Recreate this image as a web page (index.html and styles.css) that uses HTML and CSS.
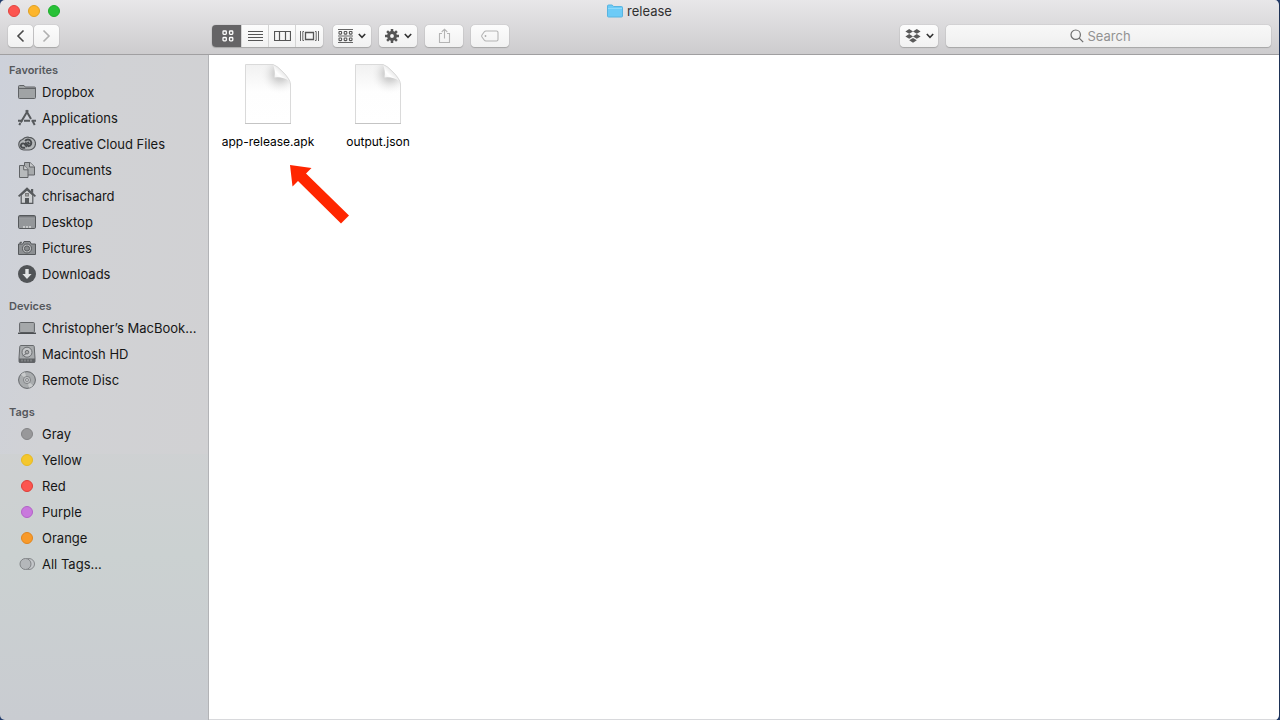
FILE: index.html
```html
<!DOCTYPE html>
<html lang="en">
<head>
<meta charset="utf-8">
<title>release</title>
<link rel="stylesheet" href="styles.css">
</head>
<body>
<div class="window">
  <header class="chrome">
    <div class="titlebar">
      <div class="lights">
        <button class="light light-close" aria-label="Close"></button>
        <button class="light light-min" aria-label="Minimize"></button>
        <button class="light light-zoom" aria-label="Zoom"></button>
      </div>
      <h1 class="title">
        <svg class="title-icon" width="16" height="14" viewBox="0 0 16 14"><path d="M.5 12V2q0-1 1-1h3.700l1.300 1.500H14.500q1 0 1 1V12q0 1-1 1h-13q-1 0-1-1z" fill="#6ccbf7" stroke="#58b4e0"/><path d="M1 4.500h14" stroke="#8edafb"/></svg>
        release
      </h1>
    </div>
    <div class="toolbar">
      <div class="nav">
        <button class="btn nav-btn" aria-label="Back"><svg width="9" height="14" viewBox="0 0 9 14"><path d="M7.500 1.500 2 7l5.500 5.500" class="line dark"/></svg></button>
        <button class="btn nav-btn" aria-label="Forward"><svg width="9" height="14" viewBox="0 0 9 14"><path d="M1.500 1.500 7 7l-5.500 5.500" class="line pale"/></svg></button>
      </div>
      <div class="tools">
        <div class="segments">
          <button class="seg seg-on" aria-label="Icon view"><svg width="12" height="12" viewBox="0 0 12 12"><g fill="none" stroke="#fff" stroke-width="1.300"><rect x="1" y="1" width="3.300" height="3.300" rx=".8"/><rect x="7.500" y="1" width="3.300" height="3.300" rx=".8"/><rect x="1" y="7.500" width="3.300" height="3.300" rx=".8"/><rect x="7.500" y="7.500" width="3.300" height="3.300" rx=".8"/></g></svg></button>
          <button class="seg" aria-label="List view"><svg width="15" height="12" viewBox="0 0 15 12"><path d="M0 1.500h15M0 4.500h15M0 7.500h15M0 10.500h15" stroke="#555"/></svg></button>
          <button class="seg" aria-label="Column view"><svg width="17" height="12" viewBox="0 0 17 12"><path d="M.5 1.500h16v9H.5zM5.500 1.500v9M11.500 1.500v9" fill="none" stroke="#555" stroke-width="1.200"/></svg></button>
          <button class="seg seg-last" aria-label="Gallery view"><svg width="19" height="12" viewBox="0 0 19 12"><path d="M5.500 2.500h8v7h-8z" fill="none" stroke="#555" stroke-width="1.300"/><path d="M.5 1v10M18.500 1v10M4 1.500H2.800v9H4M15 1.500h1.200v9H15" fill="none" stroke="#666"/></svg></button>
        </div>
        <button class="btn tool" aria-label="Arrange"><svg width="15" height="14" viewBox="0 0 15 14"><path d="M0 .5h15M0 7h15M0 13.500h15" stroke="#666"/><g fill="none" stroke="#555" stroke-width="1.100"><rect x="1" y="2.500" width="2.600" height="2.600" rx=".6"/><rect x="6.200" y="2.500" width="2.600" height="2.600" rx=".6"/><rect x="11.400" y="2.500" width="2.600" height="2.600" rx=".6"/><rect x="1" y="9" width="2.600" height="2.600" rx=".6"/><rect x="6.200" y="9" width="2.600" height="2.600" rx=".6"/><rect x="11.400" y="9" width="2.600" height="2.600" rx=".6"/></g></svg><svg class="chev" width="8" height="6" viewBox="0 0 8 6"><path d="m.8 1 3.200 3.300L7.200 1" class="line ink"/></svg></button>
        <button class="btn tool" aria-label="Action"><svg width="14" height="14" viewBox="-7 -7 14 14"><circle r="3.400" fill="none" stroke="#555" stroke-width="3"/><path d="M0-7V-4M0 4V7M-7 0h3M4 0h3M-4.900-4.900l2 2M2.900 2.900l2 2M-4.900 4.900l2-2M2.900-2.900l2-2" stroke="#555" stroke-width="2.500"/></svg><svg class="chev" width="8" height="6" viewBox="0 0 8 6"><path d="m.8 1 3.200 3.300L7.200 1" class="line ink"/></svg></button>
        <button class="btn tool" aria-label="Share"><svg width="13" height="16" viewBox="0 0 13 16"><path d="M4 5.500H1.500v9h10v-9H9M6.500 10.500V1.500M3.700 4l2.800-2.800L9.300 4" fill="none" stroke="#b4b4b4" stroke-width="1.100"/></svg></button>
        <button class="btn tool" aria-label="Edit tags"><svg width="18" height="12" viewBox="0 0 18 12"><path d="M5 1h10.500q1.500 0 1.500 1.500v7q0 1.500-1.500 1.500H5Q4 11 3.300 10.200L1 7Q.4 6 1 5l2.300-3.200Q4 1 5 1z" fill="none" stroke="#b4b4b4" stroke-width="1.100"/><circle cx="4.500" cy="6" r=".9" fill="#aaa"/></svg></button>
      </div>
      <button class="btn tool dropbox" aria-label="Dropbox"><svg width="16" height="14" viewBox="0 0 16 14"><path d="m4.200 0 3.800 2.400-3.800 2.400L.4 2.400zM11.800 0l3.800 2.400-3.800 2.400L8 2.400zM4.200 5l3.800 2.400-3.800 2.400L.4 7.400zM11.800 5l3.800 2.400-3.800 2.400L8 7.400zM8 8.900l3.800 2.400L8 13.700l-3.800-2.400z" fill="#5a5a5a"/></svg><svg class="chev" width="8" height="6" viewBox="0 0 8 6"><path d="m.8 1 3.200 3.300L7.200 1" class="line ink"/></svg></button>
      <label class="search">
        <svg width="14" height="14" viewBox="0 0 14 14"><circle cx="5.700" cy="5.700" r="4.700" class="thin"/><path d="m9.200 9.200 4 4" class="thin"/></svg>
        <input class="search-input" type="text" placeholder="Search" aria-label="Search">
      </label>
    </div>
  </header>
  <div class="content">
    <nav class="sidebar">
      <h2 class="group">Favorites</h2>
      <a class="item" href="#"><svg class="ico" viewBox="0 0 18 18"><path d="M.5 14.500v-11q0-1 1-1H6L7.200 4h9.300q1 0 1 1v9.500q0 1-1 1h-15q-1 0-1-1z" fill="#a0a3a5" stroke="#606366"/><path d="M1 5.500h16" stroke="#606366"/></svg>Dropbox</a>
      <a class="item" href="#"><svg class="ico" viewBox="0 0 18 18"><path d="M8 1.200 13 10M10 1.200 2.700 13.500M14.600 12l2.100 4" fill="none" stroke="#56595c" stroke-width="2"/><path d="M0 11.700h4.500M6 11.700h6M13.500 11.700H18M2.300 14 1.300 16.200" stroke="#56595c" stroke-width="2"/></svg>Applications</a>
      <a class="item" href="#"><svg class="ico" viewBox="0 0 18 18"><path d="M5.800 15a5.400 5.400 0 0 1-1.300-10.500A6.600 6.600 0 0 1 11 2.300a6.400 6.400 0 0 1 6.500 6.300A6.400 6.400 0 0 1 11 15z" fill="#b4b7b9" stroke="#56595c" stroke-width="1.200"/><path d="M9 11.900 6.200 8.700a2.200 2.200 0 1 0-.5 4h1.500" fill="none" stroke="#484b4e" stroke-width="1.900"/><path d="m7.200 7.500 3.500 3.600a3.300 3.300 0 1 0-3.500-5" fill="none" stroke="#484b4e" stroke-width="2"/><path d="m9.500 7 2 2.100" stroke="#484b4e" stroke-width="1.900"/></svg>Creative Cloud Files</a>
      <a class="item" href="#"><svg class="ico" viewBox="0 0 18 18"><path d="M6.500 14V1.500H12l4.500 4.300V14z" fill="#a7aaac" stroke="#606366"/><path d="M11.500 1.500V6h5" fill="#c8cacc" stroke="#606366"/><path d="M1.500 16.500V4.500H6l4 4v8z" fill="#b7babc" stroke="#606366"/><path d="M5.700 4.500v4.300H10" fill="#d0d2d3" stroke="#606366"/></svg>Documents</a>
      <a class="item" href="#"><svg class="ico" viewBox="0 0 18 18"><path d="M3.200 8v8.300h11.600V8L9 2.800z" fill="#cfd1d3" stroke="#56595c" stroke-width="1.200"/><path d="M.6 9.300 9 1.500l8.400 7.800" fill="none" stroke="#56595c" stroke-width="1.800"/><path d="M13 2h2.200v4.500L13 4.500zM7 11h4v5.500H7z" fill="#56595c"/><rect x="7.600" y="6.500" width="2.800" height="2.500" fill="#a6a9ab" stroke="#777"/></svg>chrisachard</a>
      <a class="item" href="#"><svg class="ico" viewBox="0 0 18 18"><rect x=".5" y="2.500" width="17" height="13" rx="1.200" fill="#94979a" stroke="#56595c"/><path d="M1 4h16" stroke="#56595c"/><path d="M5 14h2M8 14h2M11 14h2" stroke="#d5d7d8" stroke-width="1.500"/><path d="M1 4.800h16" stroke="#aeb1b3" stroke-width=".6"/></svg>Desktop</a>
      <a class="item" href="#"><svg class="ico" viewBox="0 0 18 18"><path d="M.5 5h4.200L6 2.500h6L13.300 5h4.200v10.500H.5zM2 5V3.300h2" fill="#8d9093" stroke="#56595c"/><circle cx="9" cy="9.500" r="4.500" fill="#c3c5c7" stroke="#56595c"/><circle cx="9" cy="9.500" r="2.600" fill="#888b8d" stroke="#56595c"/></svg>Pictures</a>
      <a class="item" href="#"><svg class="ico" viewBox="0 0 18 18"><circle cx="9" cy="9" r="9" fill="#515457"/><path d="M7.300 4h3.400v5h2.900L9 14 4.400 9h2.900z" fill="#e2e4e5"/></svg>Downloads</a>

      <h2 class="group">Devices</h2>
      <a class="item" href="#"><svg class="ico" viewBox="0 0 18 18"><rect x="1.600" y="3.500" width="14.800" height="10" rx="1" fill="#a5a8aa" stroke="#606366"/><path d="M0 14.300h18" stroke="#4c4f52" stroke-width="1.400"/></svg>Christopher’s MacBook...</a>
      <a class="item" href="#"><svg class="ico" viewBox="0 0 18 18"><path d="M2.800.5h12.400q.8 0 1 1l.8 11.500v3.500q0 1-1 1H2q-1 0-1-1V13L1.800 1.500q.2-1 1-1z" fill="#a8abad" stroke="#66696c"/><circle cx="9" cy="7.200" r="5" fill="#c6c8ca" stroke="#6d7073"/><circle cx="9" cy="7.200" r="1.800" fill="#aaa" stroke="#6d7073"/><path d="M8.500 8.500 4.500 11" stroke="#6d7073"/><path d="M1 13.500h16v4H1z" fill="#606366"/><path d="M4 14.500v2M7 14.500v2M10 14.500v2M13 14.500v2" stroke="#999c9e"/></svg>Macintosh HD</a>
      <a class="item" href="#"><svg class="ico" viewBox="0 0 18 18"><circle cx="9" cy="9" r="8.400" fill="#a9acae" stroke="#66696c"/><path d="m9 9-6-5.500A8 8 0 0 1 7 1.300zM9 9l6 5.500a8 8 0 0 1-4 2.200z" fill="#c9cbcc"/><circle cx="9" cy="9" r="3.600" fill="#bfc1c3" stroke="#777a7c" stroke-width=".8"/><circle cx="9" cy="9" r="1.500" fill="#d0d2d3" stroke="#777a7c" stroke-width=".8"/></svg>Remote Disc</a>

      <h2 class="group">Tags</h2>
      <a class="item" href="#"><span class="dot dot-gray"></span>Gray</a>
      <a class="item" href="#"><span class="dot dot-yellow"></span>Yellow</a>
      <a class="item" href="#"><span class="dot dot-red"></span>Red</a>
      <a class="item" href="#"><span class="dot dot-purple"></span>Purple</a>
      <a class="item" href="#"><span class="dot dot-orange"></span>Orange</a>
      <a class="item" href="#"><svg class="ico" viewBox="0 0 18 18"><circle cx="11" cy="9" r="5.500" fill="#c3c6c9" stroke="#85888b"/><circle cx="7.500" cy="9" r="5.500" fill="#b4b7ba" stroke="#808386"/></svg>All Tags...</a>
    </nav>
    <main class="files">
      <figure class="file">
        <svg class="page" width="48" height="62" viewBox="0 0 48 62">
          <defs>
            <linearGradient id="paper" x1="0" y1="0" x2="0" y2="1"><stop offset="0" stop-color="#f1f1f1"/><stop offset=".45" stop-color="#fefefe"/><stop offset="1" stop-color="#fff"/></linearGradient>
            <radialGradient id="shade" gradientUnits="userSpaceOnUse" cx="36" cy="11" r="21"><stop offset="0" stop-color="#b8b8b8"/><stop offset=".35" stop-color="#cfcfcf" stop-opacity=".8"/><stop offset="1" stop-color="#fff" stop-opacity="0"/></radialGradient>
            <linearGradient id="curl" gradientUnits="userSpaceOnUse" x1="39" y1="8" x2="31" y2="16"><stop offset="0" stop-color="#e6e6e6"/><stop offset=".5" stop-color="#fff"/><stop offset="1" stop-color="#f0f0f0"/></linearGradient>
          </defs>
          <path d="M1.500 1.500H29Q33 2.500 39 9q7 7 7.500 12v39.500h-45z" fill="url(#paper)"/>
          <path d="M1.500 1.500H29Q33 2.500 39 9q7 7 7.500 12v39.500h-45z" fill="url(#shade)"/>
          <path d="M29 1.500Q31.500 7 30.500 14.500 39 13.500 45 18 44 14 39 9 33 3 29 1.500z" fill="url(#curl)"/>
          <path d="M1.500 60.500v-59H29Q33 2.500 39 9q7 7 7.500 12v39.500" fill="none" stroke="#dadada"/>
          <path d="M1 60.500h46" stroke="#c4c4c4"/>
        </svg>
        <figcaption>app-release.apk</figcaption>
      </figure>
      <figure class="file">
        <svg class="page" width="48" height="62" viewBox="0 0 48 62">
          <path d="M1.500 1.500H29Q33 2.500 39 9q7 7 7.500 12v39.500h-45z" fill="url(#paper)"/>
          <path d="M1.500 1.500H29Q33 2.500 39 9q7 7 7.500 12v39.500h-45z" fill="url(#shade)"/>
          <path d="M29 1.500Q31.500 7 30.500 14.500 39 13.500 45 18 44 14 39 9 33 3 29 1.500z" fill="url(#curl)"/>
          <path d="M1.500 60.500v-59H29Q33 2.500 39 9q7 7 7.500 12v39.500" fill="none" stroke="#dadada"/>
          <path d="M1 60.500h46" stroke="#c4c4c4"/>
        </svg>
        <figcaption>output.json</figcaption>
      </figure>
      <svg class="arrow" width="60" height="60" viewBox="0 0 60 60"><path d="M1 1 22.500 4 17 9.500 60 51.500 52 59.500 9 17 3.500 22.500z" fill="#ff2600"/></svg>
    </main>
  </div>
</div>
</body>
</html>
```

FILE: styles.css
```css
* { box-sizing: border-box; }

body {
  margin: 0;
  background: #233c6c;
  font-family: Inter, "Liberation Sans", sans-serif;
  font-size: 13px;
  color: #161616;
}

button { font: inherit; padding: 0; border: 0; }

.window {
  display: flex;
  flex-direction: column;
  height: 100vh;
  border-right: 1px solid #1d3256;
  border-radius: 5px;
  overflow: hidden;
}

.chrome {
  background: linear-gradient(#e8e7e9, #cdccce);
  border-bottom: 1px solid #a09fa1;
}

.titlebar {
  display: grid;
  grid-template-columns: 1fr auto 1fr;
  align-items: center;
  height: 22px;
  padding: 0 8px;
}

.lights { display: flex; gap: 8px; }
.light { width: 12px; height: 12px; border-radius: 50%; border: 1px solid; }
.light-close { background: #fc5550; border-color: #e1443f; }
.light-min { background: #fdb52c; border-color: #dfa023; }
.light-zoom { background: #28c137; border-color: #1dad2b; }

.title {
  display: flex;
  align-items: center;
  gap: 4px;
  margin: 0;
  font-size: 13px;
  font-weight: 400;
  color: #303030;
}

.toolbar {
  display: flex;
  gap: 8px;
  height: 32px;
  padding: 3px 8px 6px;
}

.nav { display: flex; gap: 1px; width: 196px; }

.btn {
  display: flex;
  align-items: center;
  justify-content: center;
  height: 22px;
  background: linear-gradient(#fcfcfc, #f1f1f1);
  border-radius: 4px;
  box-shadow: 0 0 1px #888, 0 1px 1px #aaa;
}

.nav-btn { width: 25px; }
.tool { width: 38px; gap: 5px; }
.tools { display: flex; gap: 8px; }
.dropbox { margin-left: auto; }

.segments {
  display: flex;
  gap: 1px;
  margin-right: 2px;
  height: 22px;
  background: #d4d4d4;
  border-radius: 4px;
  box-shadow: 0 0 1px #888, 0 1px 1px #aaa;
  overflow: hidden;
}

.seg {
  display: flex;
  align-items: center;
  justify-content: center;
  width: 26px;
  background: linear-gradient(#fcfcfc, #f1f1f1);
}
.seg-on { width: 29px; padding-left: 2px; background: #656466; }
.seg-last { width: 27px; }

.line { fill: none; stroke-width: 1.6; }
.dark { stroke: #4a4a4a; }
.pale { stroke: #b0b0b0; }
.ink { stroke: #333; }
.thin { fill: none; stroke: #6c6c6c; stroke-width: 1.2; }

.search {
  display: flex;
  align-items: center;
  justify-content: center;
  gap: 4px;
  width: 325px;
  height: 22px;
  background: linear-gradient(#f8f8f8, #efefef);
  border-radius: 4px;
  box-shadow: 0 0 1px #888, 0 1px 1px #aaa;
}
.search-input {
  width: 60px;
  padding: 0;
  border: 0;
  outline: 0;
  background: none;
  font: inherit;
}
.search-input::placeholder { color: #929292; }

.content { display: flex; flex: 1; min-height: 0; }

.sidebar {
  flex: none;
  width: 209px;
  padding: 6px 8px 0 9px;
  background: linear-gradient(100deg, #cdd1da, #d1d2d5 40%, #d1d1d3) top / 100% 60% no-repeat, linear-gradient(#d0d1d3 55%, #cbd1d1 75%, #c9ccd1);
  border-right: 1px solid #b2b3b6;
}

.group {
  margin: 10px 0 0;
  font-size: 11px;
  font-weight: 600;
  line-height: 18px;
  color: #55585c;
}
.group:first-child { margin-top: 0; }

.item {
  display: flex;
  align-items: center;
  gap: 6px;
  height: 26px;
  padding-left: 9px;
  color: inherit;
  text-decoration: none;
  white-space: nowrap;
}
.ico { flex: none; width: 18px; height: 18px; }

.dot { width: 12px; height: 12px; margin: 0 3px; border: 1px solid; border-radius: 50%; }
.dot-gray { background: #98989a; border-color: #838385; }
.dot-yellow { background: #f4c72d; border-color: #e6b922; }
.dot-red { background: #fc554f; border-color: #dd3e38; }
.dot-purple { background: #c979dd; border-color: #b262c7; }
.dot-orange { background: #f89a2a; border-color: #e2851c; }

.files {
  position: relative;
  display: flex;
  flex: 1;
  align-items: flex-start;
  padding: 8px 4px;
  background: #fff;
  border-bottom: 1px solid #d8d9dc;
}

.file {
  display: flex;
  flex-direction: column;
  align-items: center;
  gap: 9px;
  width: 110px;
  margin: 0;
  font-size: 12px;
  line-height: 16px;
  color: #000;
}

.arrow { position: absolute; left: 80px; top: 109px; }
```
